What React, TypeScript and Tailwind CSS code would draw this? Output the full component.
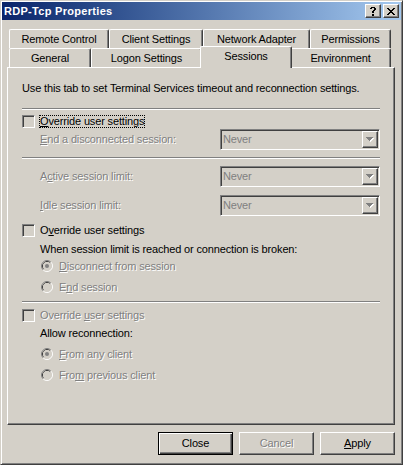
import React from "react";

type P = { rows: string[]; color: string; shadow?: string };

function Pixels({ rows, color, shadow }: P) {
  const w = rows[0].length;
  const h = rows.length;
  const pts: [number, number][] = [];
  rows.forEach((r, y) =>
    r.split("").forEach((c, x) => {
      if (c === "X") pts.push([x, y]);
    })
  );
  return (
    <svg
      width={w + (shadow ? 1 : 0)}
      height={h + (shadow ? 1 : 0)}
      shapeRendering="crispEdges"
      className="block"
    >
      {shadow &&
        pts.map(([x, y]) => (
          <rect key={"s" + x + "-" + y} x={x + 1} y={y + 1} width={1} height={1} fill={shadow} />
        ))}
      {pts.map(([x, y]) => (
        <rect key={x + "-" + y} x={x} y={y} width={1} height={1} fill={color} />
      ))}
    </svg>
  );
}

const CLOSE_X = [
  "XX....XX",
  ".XX..XX.",
  "..XXXX..",
  "...XX...",
  "..XXXX..",
  ".XX..XX.",
  "XX....XX",
];
const HELP_Q = [
  ".XXXX.",
  "XX..XX",
  "....XX",
  "...XX.",
  "..XX..",
  "..XX..",
  "......",
  "..XX..",
  "..XX..",
];
const ARROW = ["XXXXXXX", ".XXXXX.", "..XXX..", "...X..."];

const dis = "text-[#808080] [text-shadow:1px_1px_0_#fff]";
const raised =
  "border border-t-white border-l-white border-r-[#404040] border-b-[#404040] shadow-[inset_-1px_-1px_0_#808080]";
const sunken =
  "border border-t-[#808080] border-l-[#808080] border-r-white border-b-white shadow-[inset_1px_1px_0_#404040,inset_-1px_-1px_0_#d4d0c8]";

function U({ children }: { children: React.ReactNode }) {
  return <span className="underline underline-offset-[1px]">{children}</span>;
}

function Checkbox() {
  return <div className={"h-[13px] w-[13px] shrink-0 bg-[#d4d0c8] " + sunken} />;
}

function Radio({ checked }: { checked?: boolean }) {
  return (
    <svg width={12} height={12} className="block shrink-0">
      <path d="M2.11 9.89 A5.5 5.5 0 0 1 9.89 2.11" stroke="#808080" fill="none" />
      <path d="M9.89 2.11 A5.5 5.5 0 0 1 2.11 9.89" stroke="#ffffff" fill="none" />
      <path d="M2.82 9.18 A4.5 4.5 0 0 1 9.18 2.82" stroke="#404040" fill="none" />
      <path d="M9.18 2.82 A4.5 4.5 0 0 1 2.82 9.18" stroke="#d4d0c8" fill="none" />
      <circle cx={6} cy={6} r={4} fill="#d4d0c8" />
      {checked && <circle cx={6} cy={6} r={2} fill="#808080" />}
    </svg>
  );
}

function Combo() {
  return (
    <div className={"flex h-[21px] w-[160px] shrink-0 bg-[#d4d0c8] p-[1px] " + sunken}>
      <div className="flex flex-1 items-center pl-[1px] text-[#808080]">Never</div>
      <div className={"flex w-[16px] items-center justify-center " + raised}>
        <Pixels rows={ARROW} color="#808080" shadow="#ffffff" />
      </div>
    </div>
  );
}

function Tab({ label, w, selected }: { label: string; w: number; selected?: boolean }) {
  if (selected) {
    return (
      <div
        style={{ width: w + 4 }}
        className="relative z-10 -mx-[2px] -mt-[2px] flex h-[22px] items-center justify-center rounded-t-[2px] border-l border-t border-r border-l-white border-t-white border-r-[#404040] bg-[#d4d0c8] pb-[2px] shadow-[inset_-1px_0_0_#808080]"
      >
        {label}
      </div>
    );
  }
  return (
    <div
      style={{ width: w }}
      className="flex h-[19px] items-center justify-center rounded-t-[2px] border-l border-t border-r border-l-white border-t-white border-r-[#404040] bg-[#d4d0c8] pt-[1px] shadow-[inset_-1px_0_0_#808080]"
    >
      {label}
    </div>
  );
}

function Sep({ mt }: { mt: string }) {
  return <div className={"h-[2px] border-t border-b border-t-[#808080] border-b-white " + mt} />;
}

export default function App() {
  return (
    <div className="font-['Liberation_Sans',Arial,sans-serif] text-[11px] tracking-[-0.15px] text-black">
      <div className="flex h-[465px] w-[403px] flex-col border border-t-[#d4d0c8] border-l-[#d4d0c8] border-r-[#404040] border-b-[#404040] bg-[#d4d0c8] p-[1px] shadow-[inset_1px_1px_0_#fff,inset_-1px_-1px_0_#808080]">
        {/* Title bar */}
        <div className="flex h-[18px] shrink-0 items-center bg-gradient-to-r from-[#0a246a] to-[#a6caf0] pl-[2px] pr-[2px]">
          <div className="flex-1 text-[11px] font-bold tracking-[0.3px] text-white">RDP-Tcp Properties</div>
          <div className="flex gap-[2px]">
            <div className={"flex h-[14px] w-[16px] items-center justify-center bg-[#d4d0c8] " + raised}>
              <Pixels rows={HELP_Q} color="#000" />
            </div>
            <div className={"flex h-[14px] w-[16px] items-center justify-center bg-[#d4d0c8] " + raised}>
              <Pixels rows={CLOSE_X} color="#000" />
            </div>
          </div>
        </div>

        {/* Body */}
        <div className="flex flex-1 flex-col pl-[5px] pr-[6px] pt-[9px]">
          <div className="flex flex-col px-[2px]">
            <div className="flex">
              <Tab label="Remote Control" w={100} />
              <Tab label="Client Settings" w={94} />
              <Tab label="Network Adapter" w={107} />
              <Tab label="Permissions" w={81} />
            </div>
            <div className="flex h-[19px]">
              <Tab label="General" w={82} />
              <Tab label="Logon Settings" w={111} />
              <Tab label="Sessions" w={88} selected />
              <Tab label="Environment" w={101} />
            </div>
          </div>

          {/* Panel */}
          <div className="flex h-[358px] flex-col border border-t-white border-l-white border-r-[#404040] border-b-[#404040] px-[14px] shadow-[inset_-1px_-1px_0_#808080]">
            <div className="mt-[13px] flex h-[14px] items-center">
              Use this tab to set Terminal Services timeout and reconnection settings.
            </div>
            <Sep mt="mt-[13px]" />

            <div className="mt-[5px] flex h-[13px] items-center">
              <Checkbox />
              <span className="ml-[4px] border border-dotted border-black leading-[11px]">
                <U>O</U>verride user settings
              </span>
            </div>
            <div className="mt-[1px] flex h-[21px] items-center">
              <div className={"ml-[18px] flex-1 " + dis}>
                <U>E</U>nd a disconnected session:
              </div>
              <Combo />
            </div>
            <Sep mt="mt-[7px]" />
            <div className="mt-[7px] flex h-[21px] items-center">
              <div className={"ml-[18px] flex-1 " + dis}>
                A<U>c</U>tive session limit:
              </div>
              <Combo />
            </div>
            <div className="mt-[8px] flex h-[21px] items-center">
              <div className={"ml-[18px] flex-1 " + dis}>
                <U>I</U>dle session limit:
              </div>
              <Combo />
            </div>

            <div className="mt-[8px] flex h-[13px] items-center">
              <Checkbox />
              <span className="ml-[5px]">
                O<U>v</U>erride user settings
              </span>
            </div>
            <div className="ml-[18px] mt-[5px] flex h-[14px] items-center">
              When session limit is reached or connection is broken:
            </div>
            <div className="ml-[19px] mt-[3px] flex h-[14px] items-center">
              <Radio checked />
              <span className={"ml-[6px] " + dis}>
                <U>D</U>isconnect from session
              </span>
            </div>
            <div className="ml-[19px] mt-[7px] flex h-[14px] items-center">
              <Radio />
              <span className={"ml-[6px] " + dis}>
                E<U>n</U>d session
              </span>
            </div>
            <Sep mt="mt-[7px]" />

            <div className="mt-[6px] flex h-[13px] items-center">
              <Checkbox />
              <span className={"ml-[5px] " + dis}>
                Override <U>u</U>ser settings
              </span>
            </div>
            <div className="ml-[18px] mt-[4px] flex h-[14px] items-center">Allow reconnection:</div>
            <div className="ml-[19px] mt-[7px] flex h-[14px] items-center">
              <Radio checked />
              <span className={"ml-[6px] " + dis}>
                <U>F</U>rom any client
              </span>
            </div>
            <div className="ml-[19px] mt-[7px] flex h-[14px] items-center">
              <Radio />
              <span className={"ml-[6px] " + dis}>
                Fro<U>m</U> previous client
              </span>
            </div>
          </div>

          {/* Buttons */}
          <div className="mt-[7px] flex justify-end gap-[6px]">
            <div className="flex h-[23px] w-[75px] items-center justify-center border border-black shadow-[inset_1px_1px_0_#fff,inset_-1px_-1px_0_#404040,inset_-2px_-2px_0_#808080]">
              Close
            </div>
            <div className={"flex h-[23px] w-[75px] items-center justify-center " + raised + " " + dis}>
              Cancel
            </div>
            <div className={"flex h-[23px] w-[75px] items-center justify-center " + raised}>
              <span>
                <U>A</U>pply
              </span>
            </div>
          </div>
        </div>
      </div>
    </div>
  );
}
